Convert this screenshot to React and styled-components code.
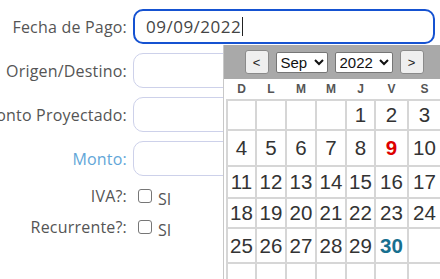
import React from 'react'
import styled, { createGlobalStyle } from 'styled-components'

const GlobalStyle = createGlobalStyle`
    body {
        margin: 0;
        background: #fff;
        font-family: "Open Sans", "Liberation Sans", sans-serif;
    }
`
const Page = styled.div`
    position: relative;
    width: 440px;
    height: 279px;
    overflow: hidden;
`
const Form = styled.div`
    display: flex;
    flex-direction: column;
    gap: 9px;
    margin-top: -35px;
`
const Row = styled.div`
    display: grid;
    grid-template-columns: 127px 302px;
    column-gap: 6px;
    align-items: center;
    height: ${props => props.h || 35}px;
`
const Label = styled.div`
    display: flex;
    justify-content: flex-end;
    white-space: nowrap;
    font-size: 16px;
    letter-spacing: 0.2px;
    color: ${props => props.color || '#555'};
`
const InputBox = styled.div`
    box-sizing: border-box;
    height: 35px;
    display: flex;
    align-items: center;
    padding-left: ${props => props.active ? 11 : 12}px;
    border: ${props => props.active ? '2px solid #1552d1' : '1px solid #cdd1ea'};
    border-radius: 10px;
    font-size: 17px;
    letter-spacing: 0.5px;
    color: #444;
`
const Caret = styled.span`
    display: inline-block;
    width: 1px;
    height: 19px;
    margin-left: 1px;
    background: #222;
`
const Check = styled.div`
    display: flex;
    align-items: center;
    gap: 6px;
    padding-left: 5px;
    font-size: 16px;
    color: #555;
`
const Box = styled.span`
    box-sizing: border-box;
    width: 14px;
    height: 14px;
    border: 1.5px solid #767676;
    border-radius: 3px;
`
const Si = styled.span`
    position: relative;
    top: 3px;
`
const Popup = styled.div`
    position: absolute;
    left: 223px;
    top: 45px;
    width: 222px;
    background: #fff;
    border-left: 1px solid #c8c8c8;
    font-family: "Liberation Sans", Arial, sans-serif;
`
const Header = styled.div`
    height: 34px;
    background: #a9a9a9;
    display: flex;
    align-items: center;
    justify-content: center;
    gap: 7px;
    padding-right: 2px;
`
const NavButton = styled.button`
    box-sizing: border-box;
    width: 24px;
    height: 24px;
    padding: 0;
    border: 1px solid #8a8a8a;
    border-radius: 3px;
    background: #efefef;
    font-family: "Liberation Sans", Arial, sans-serif;
    font-size: 13px;
    color: #222;
`
const Select = styled.select`
    box-sizing: border-box;
    height: 21px;
    width: ${props => props.w}px;
    font-family: "Liberation Sans", Arial, sans-serif;
    font-size: 15px;
    color: #111;
    background: #fff;
    border: 1px solid #767676;
    border-radius: 2px;
`
const Table = styled.table`
    margin-left: 2px;
    border-collapse: collapse;
    table-layout: fixed;
`
const Day = styled.th`
    height: 20px;
    padding: 0;
    font-size: 12px;
    font-weight: bold;
    color: #555;
    text-align: center;
`
const Cell = styled.td`
    padding: 0;
    border: 2px solid #d6d6d6;
    text-align: center;
    font-size: 20.5px;
    color: ${props => props.color || '#333'};
    font-weight: ${props => props.bold ? 'bold' : 'normal'};
`

const widths = [29, 30, 30, 30, 29, 33, 33]
const heights = [30, 36, 32, 30, 35, 30]
const weeks = [
    [null, null, null, null, 1, 2, 3],
    [4, 5, 6, 7, 8, 9, 10],
    [11, 12, 13, 14, 15, 16, 17],
    [18, 19, 20, 21, 22, 23, 24],
    [25, 26, 27, 28, 29, 30, null],
    [null, null, null, null, null, null, null],
]

const dayColor = d => d === 9 ? '#dd0000' : d === 30 ? '#17708f' : null

const Calendar = () => (
    <Popup>
        <Header>
            <NavButton>&lt;</NavButton>
            <Select w={52} defaultValue="Sep">
                <option>Sep</option>
            </Select>
            <Select w={58} defaultValue="2022">
                <option>2022</option>
            </Select>
            <NavButton>&gt;</NavButton>
        </Header>
        <Table>
            <colgroup>
                {widths.map((w, i) => <col key={i} style={{ width: w }} />)}
            </colgroup>
            <thead>
                <tr>
                    {['D', 'L', 'M', 'M', 'J', 'V', 'S'].map((d, i) => <Day key={i}>{d}</Day>)}
                </tr>
            </thead>
            <tbody>
                {weeks.map((week, r) => (
                    <tr key={r} style={{ height: heights[r] }}>
                        {week.map((d, i) => (
                            <Cell key={i} color={dayColor(d)} bold={d === 9 || d === 30}>{d}</Cell>
                        ))}
                    </tr>
                ))}
            </tbody>
        </Table>
    </Popup>
)

const App = () => {
    return (
        <Page>
            <GlobalStyle />
            <Form>
                <Row>
                    <Label />
                    <InputBox />
                </Row>
                <Row>
                    <Label>Fecha de Pago:</Label>
                    <InputBox active>09/09/2022<Caret /></InputBox>
                </Row>
                <Row>
                    <Label>Origen/Destino:</Label>
                    <InputBox />
                </Row>
                <Row>
                    <Label>Monto Proyectado:</Label>
                    <InputBox />
                </Row>
                <Row>
                    <Label color="#62a6d8">Monto:</Label>
                    <InputBox />
                </Row>
                <Row h={22}>
                    <Label>IVA?:</Label>
                    <Check><Box /><Si>SI</Si></Check>
                </Row>
                <Row h={22}>
                    <Label>Recurrente?:</Label>
                    <Check><Box /><Si>SI</Si></Check>
                </Row>
            </Form>
            <Calendar />
        </Page>
    )
}

export default App
